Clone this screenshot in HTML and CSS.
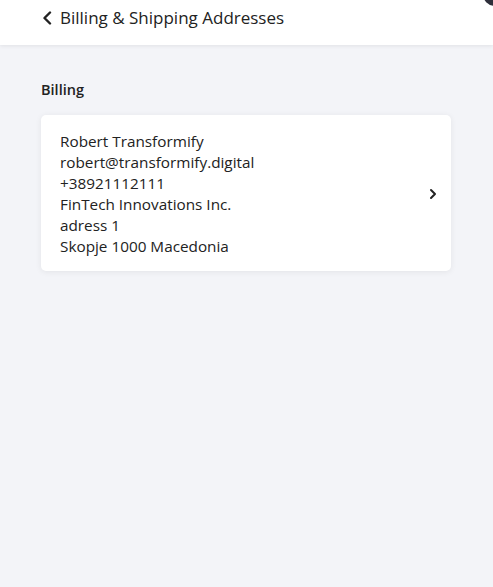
FILE: index.html
```html
<!DOCTYPE html>
<html>
<head>
<meta charset="utf-8">
<link rel="stylesheet" href="styles.css">
</head>
<body>
<header class="topbar">
  <a class="back" href="#">
    <svg class="back-icon" width="10" height="14" viewBox="0 0 10 14"><path d="M8 1.5 L2.5 7 L8 12.5" fill="none" stroke="#222" stroke-width="2.4" stroke-linecap="round" stroke-linejoin="round"/></svg>
    <span class="title">Billing &amp; Shipping Addresses</span>
  </a>
  <span class="corner-dot"></span>
</header>
<main class="content">
  <h2 class="section-title">Billing</h2>
  <div class="card">
    <div class="address">
      <div>Robert Transformify</div>
      <div>robert@transformify.digital</div>
      <div>+38921112111</div>
      <div>FinTech Innovations Inc.</div>
      <div>adress 1</div>
      <div>Skopje 1000 Macedonia</div>
    </div>
    <svg class="chev" width="8" height="12" viewBox="0 0 8 12"><path d="M2 2 L6 6 L2 10" fill="none" stroke="#222" stroke-width="2" stroke-linecap="round" stroke-linejoin="round"/></svg>
  </div>
</main>
</body>
</html>
```
FILE: styles.css
```css
* { box-sizing: border-box; }
html, body { margin: 0; padding: 0; }
body {
  background: #f3f4f8;
  font-family: "Open Sans", "Noto Sans", sans-serif;
  color: #222;
  min-height: 587px;
  overflow: hidden;
}
.topbar {
  position: relative;
  height: 45px;
  background: #fff;
  box-shadow: 0 1px 4px rgba(0,0,0,0.08);
  display: flex;
  align-items: center;
  padding-left: 42px;
  padding-bottom: 10px;
}
.back {
  display: flex;
  align-items: center;
  gap: 8px;
  text-decoration: none;
  color: #222;
}
.title {
  font-size: 17px;
}
.corner-dot {
  position: absolute;
  right: -14px;
  top: -18px;
  width: 24px;
  height: 24px;
  border-radius: 50%;
  background: #2e2f3a;
}
.content {
  padding: 35px 42px 0 41px;
}
.section-title {
  margin: 0 0 16px;
  font-size: 14.5px;
  font-weight: 600;
  color: #222;
}
.card {
  background: #fff;
  border-radius: 5px;
  box-shadow: 0 1px 6px rgba(0,0,0,0.07);
  display: flex;
  align-items: center;
  justify-content: space-between;
  padding: 16px 14px 14px 19px;
}
.address {
  font-size: 15.3px;
  line-height: 21px;
  color: #222;
}
.chev { margin-right: 0; }
```
